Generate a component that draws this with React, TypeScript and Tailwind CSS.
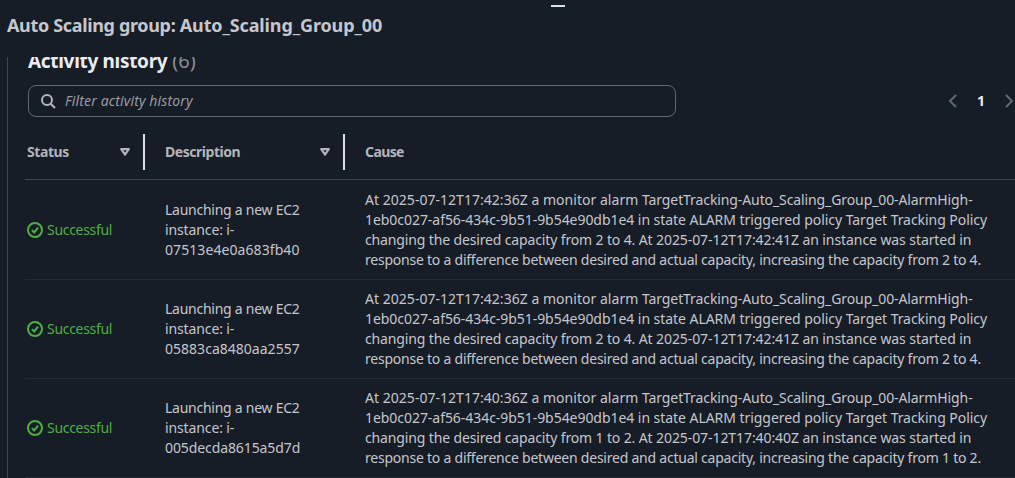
type Activity = {
  id: string;
  idClass: string;
  cause: [string, string, string, string, string, string];
};

const activities: Activity[] = [
  {
    id: "07513e4e0a683fb40",
    idClass: "tracking-[0.08px]",
    cause: [
      "At 2025-07-12T17:42:36Z a monitor alarm ",
      "TargetTracking-Auto_Scaling_Group_00-AlarmHigh-",
      "1eb0c027-af56-434c-9b51-9b54e90db1e4 in state ALARM triggered policy Target Tracking Policy",
      "changing the desired capacity from 2 to 4. ",
      "At 2025-07-12T17:42:41Z an instance was started in",
      "response to a difference between desired and actual capacity, increasing the capacity from 2 to 4.",
    ],
  },
  {
    id: "05883ca8480aa2557",
    idClass: "tracking-[0.02px]",
    cause: [
      "At 2025-07-12T17:42:36Z a monitor alarm ",
      "TargetTracking-Auto_Scaling_Group_00-AlarmHigh-",
      "1eb0c027-af56-434c-9b51-9b54e90db1e4 in state ALARM triggered policy Target Tracking Policy",
      "changing the desired capacity from 2 to 4. ",
      "At 2025-07-12T17:42:41Z an instance was started in",
      "response to a difference between desired and actual capacity, increasing the capacity from 2 to 4.",
    ],
  },
  {
    id: "005decda8615a5d7d",
    idClass: "tracking-[-0.1px]",
    cause: [
      "At 2025-07-12T17:40:36Z a monitor alarm ",
      "TargetTracking-Auto_Scaling_Group_00-AlarmHigh-",
      "1eb0c027-af56-434c-9b51-9b54e90db1e4 in state ALARM triggered policy Target Tracking Policy",
      "changing the desired capacity from 1 to 2. ",
      "At 2025-07-12T17:40:40Z an instance was started in",
      "response to a difference between desired and actual capacity, increasing the capacity from 1 to 2.",
    ],
  },
];

function SuccessIcon() {
  return (
    <svg className="h-4 w-4 shrink-0" viewBox="0 0 16 16" fill="none" stroke="currentColor" strokeWidth="2">
      <circle cx="8" cy="8" r="7" />
      <path d="M4.8 8.1 7.2 10.4 11 5.6" />
    </svg>
  );
}

function SortIcon() {
  return (
    <svg className="h-4 w-4 shrink-0" viewBox="0 0 16 16" fill="none" stroke="#b4b4bb" strokeWidth="2.2" strokeLinejoin="round">
      <path d="M4.2 5.2h7.6L8 10.6z" />
    </svg>
  );
}

function Chevron({ right = false }: { right?: boolean }) {
  return (
    <svg className="h-4 w-4 shrink-0" viewBox="0 0 16 16" fill="none" stroke="#656871" strokeWidth="2">
      <path d={right ? "M5 2l6 6-6 6" : "M11 2L5 8l6 6"} />
    </svg>
  );
}

function Row({ activity }: { activity: Activity }) {
  const { id, idClass, cause } = activity;
  return (
    <div className="flex items-center border-b border-[#232b37] py-[9px] first:pt-[10px]">
      <div className="flex w-[140px] shrink-0 items-center gap-1 pl-[2px] text-[#4fb040]">
        <SuccessIcon />
        <span className="tracking-[-0.3px]">Successful</span>
      </div>
      <div className="w-[200px] shrink-0 whitespace-nowrap">
        <div className="tracking-[-0.26px]">Launching a new EC2</div>
        <div className="tracking-[-0.12px]">instance: i-</div>
        <div className={idClass}>{id}</div>
      </div>
      <div className="whitespace-pre">
        <div>
          <span className="tracking-[0.03px]">{cause[0]}</span>
          <span className="tracking-[-0.1px]">{cause[1]}</span>
        </div>
        <div className="tracking-[-0.05px]">{cause[2]}</div>
        <div>
          <span className="tracking-[-0.14px]">{cause[3]}</span>
          <span className="tracking-[-0.08px]">{cause[4]}</span>
        </div>
        <div className="tracking-[-0.23px]">{cause[5]}</div>
      </div>
    </div>
  );
}

export default function App() {
  return (
    <div className="flex h-[478px] w-[1015px] flex-col overflow-hidden bg-[#161d26] font-['Noto_Sans',sans-serif] text-[14px] leading-5 text-[#c6c6cd]">
      <header className="flex h-[57px] shrink-0 flex-col">
        <div className="mt-[5px] ml-[551px] h-[2px] w-[14px] bg-[#dedee3]" />
        <h1 className="mt-[6px] ml-[7px] text-[18px] leading-6 font-bold whitespace-pre">
          <span className="tracking-[-0.34px]">{"Auto Scaling group: "}</span>
          <span className="tracking-[-0.12px]">Auto_Scaling_Group_00</span>
        </h1>
      </header>

      <main className="ml-[7px] flex min-h-0 flex-1 flex-col overflow-hidden border-l border-[#424650]">
        <h2 className="-mt-2 ml-5 flex h-6 shrink-0 items-center gap-[5px] text-[19px] leading-6 font-bold text-[#ebebf0]">
          <span className="tracking-[-0.32px]">Activity history</span>
          <span className="text-[20px] font-normal text-[#8c8c94]">(6)</span>
        </h2>

        <div className="mt-3 ml-5 flex h-8 shrink-0 items-center">
          <div className="flex h-8 w-[648px] shrink-0 items-center rounded-lg border border-[#656871] pl-[11px]">
            <svg className="h-4 w-4" viewBox="0 0 16 16" fill="none" stroke="#b4b4bb" strokeWidth="2">
              <circle cx="7" cy="7" r="5" />
              <path d="M10.7 10.7 15 15" />
            </svg>
            <span className="ml-[9px] tracking-[0.13px] text-[#9a9aa2] italic">Filter activity history</span>
          </div>
          <nav className="ml-[269px] flex shrink-0 items-center">
            <Chevron />
            <span className="w-10 text-center font-bold text-[#ebebf0]">1</span>
            <Chevron right />
          </nav>
        </div>

        <section className="ml-[17px] shrink-0">
          <div className="flex h-[63px] items-start border-b border-[#424650] pt-[17px] font-bold text-[#b4b4bb]">
            <div className="flex h-9 w-[120px] items-center justify-between border-r-2 border-[#dedee3] pr-[10px] pl-[2px]">
              <span className="tracking-[-0.42px]">Status</span>
              <SortIcon />
            </div>
            <div className="flex h-9 w-[200px] items-center justify-between border-r-2 border-[#dedee3] pr-[10px] pl-5">
              <span className="tracking-[-0.46px]">Description</span>
              <SortIcon />
            </div>
            <div className="flex h-9 items-center pl-5 tracking-[-0.6px]">Cause</div>
          </div>
          <div>
            {activities.map((activity) => (
              <Row key={activity.id} activity={activity} />
            ))}
          </div>
        </section>
      </main>
    </div>
  );
}
